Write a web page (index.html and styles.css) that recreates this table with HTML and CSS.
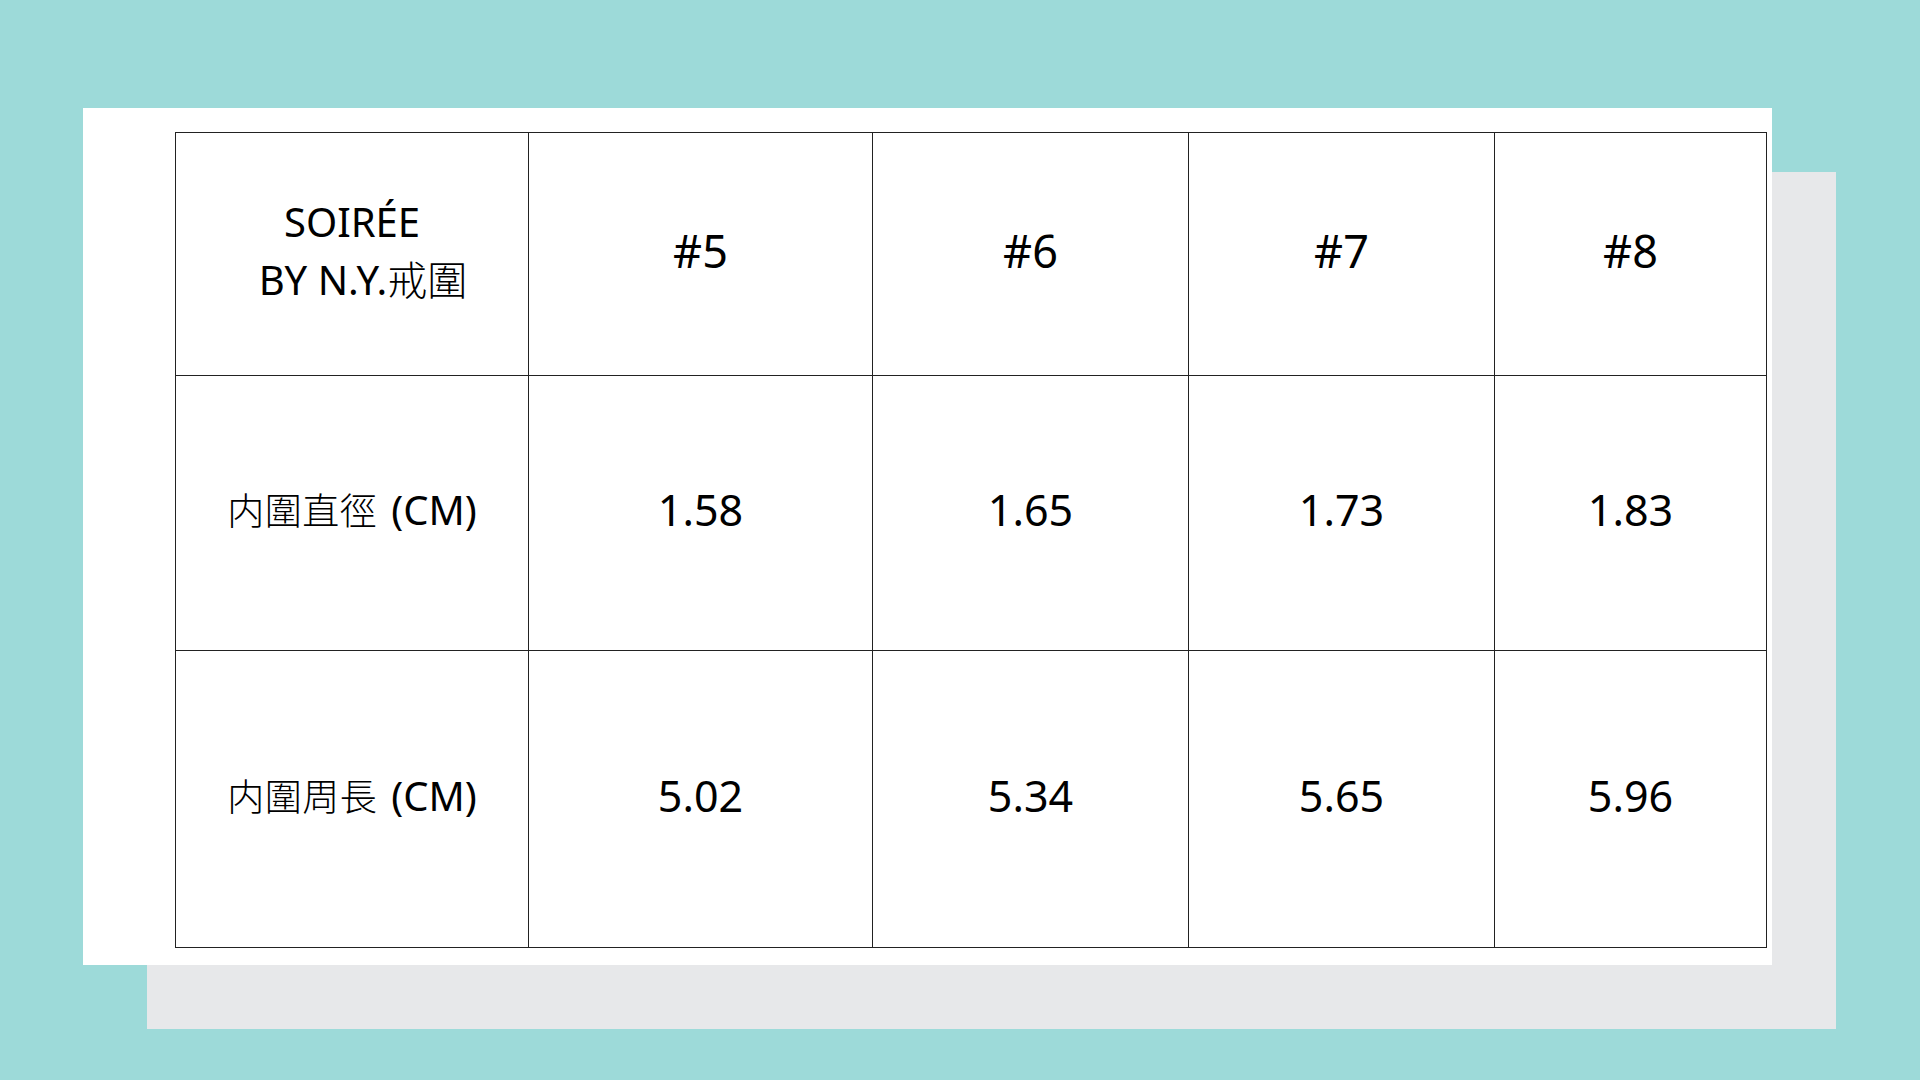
FILE: index.html
```html
<!DOCTYPE html>
<html lang="zh-Hant">
<head>
<meta charset="utf-8">
<title>SOIRÉE BY N.Y. 戒圍</title>
<link rel="stylesheet" href="styles.css">
</head>
<body>
<main class="stage">
  <section class="card">
    <table class="size-table">
      <colgroup>
        <col class="c1"><col class="c2"><col class="c3"><col class="c4"><col class="c5">
      </colgroup>
      <tr class="r-head">
        <th class="brand"><span class="l1">SOIRÉE</span><span class="l2">BY N.Y.<span class="cjk">戒圍</span></span></th>
        <th class="num-h">#5</th>
        <th class="num-h">#6</th>
        <th class="num-h">#7</th>
        <th class="num-h">#8</th>
      </tr>
      <tr class="r-dia">
        <td class="label"><span class="cjk lbl">内圍直徑</span>(CM)</td>
        <td class="num">1.58</td>
        <td class="num">1.65</td>
        <td class="num">1.73</td>
        <td class="num">1.83</td>
      </tr>
      <tr class="r-cir">
        <td class="label"><span class="cjk lbl">内圍周長</span>(CM)</td>
        <td class="num">5.02</td>
        <td class="num">5.34</td>
        <td class="num">5.65</td>
        <td class="num">5.96</td>
      </tr>
    </table>
  </section>
</main>
</body>
</html>
```
FILE: styles.css
```css
html, body {
  margin: 0;
  padding: 0;
}
body {
  width: 1920px;
  height: 1080px;
  background: #9ddad9;
  font-family: "Noto Sans", "Noto Sans CJK TC", sans-serif;
  color: #000;
  overflow: hidden;
}
.stage {
  padding: 108px 0 0 83px;
}
.card {
  width: 1689px;
  height: 857px;
  background: #fff;
  box-shadow: 64px 64px 0 0 #e7e8ea;
  box-sizing: border-box;
  padding: 24px 0 0 92px;
}
.size-table {
  border-collapse: collapse;
  width: 1591px;
  table-layout: fixed;
}
.c1 { width: 353px; }
.c2 { width: 344px; }
.c3 { width: 316px; }
.c4 { width: 306px; }
.c5 { width: 272px; }
.size-table th,
.size-table td {
  border: 1px solid #222;
  padding: 0 0 8px 0;
  text-align: center;
  vertical-align: middle;
  font-weight: 400;
}
.r-head { height: 243px; }
.r-dia { height: 275px; }
.r-cir { height: 297px; }
.cjk {
  font-family: "Noto Sans CJK TC", sans-serif;
  font-weight: 300;
}
.brand {
  font-size: 40px;
  line-height: 56px;
}
.brand.brand { padding-bottom: 6px; }
.brand > span { display: block; }
.brand .l2 { padding-left: 22px; }
.num-h {
  font-size: 45px;
}
.num {
  font-size: 43px;
}
.label {
  font-size: 40px;
}
.label .lbl {
  font-size: 37px;
  letter-spacing: 0.5px;
  margin-right: 14px;
}
```
